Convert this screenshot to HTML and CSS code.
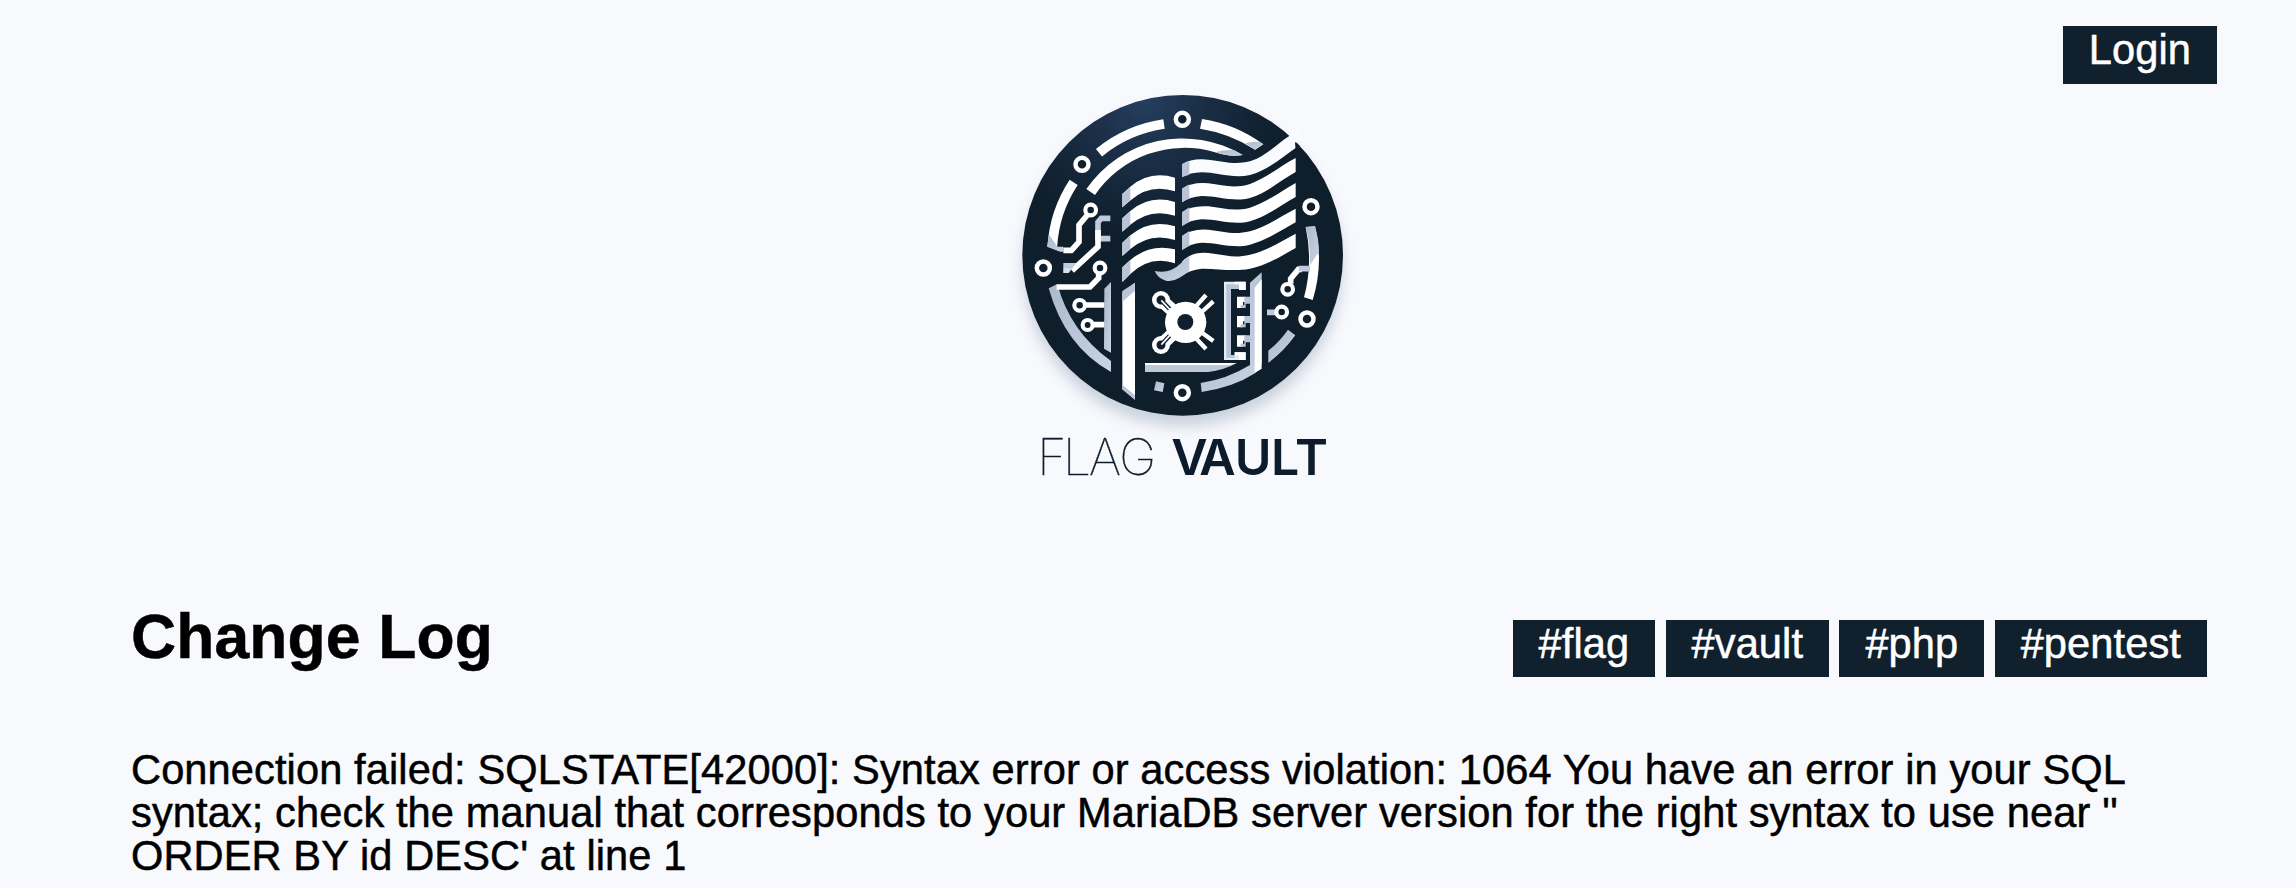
FILE: index.html
```html
<!DOCTYPE html>
<html lang="en">
<head>
<meta charset="utf-8">
<title>Flag Vault</title>
<link rel="stylesheet" href="styles.css">
</head>
<body>
<nav class="topbar"><a class="tag login">Login</a></nav>
<header class="brand">
<svg class="logo" viewBox="0 0 1080 1275" role="img" aria-label="Flag Vault">
  <defs>
    <radialGradient id="disc" gradientUnits="userSpaceOnUse" cx="430" cy="60" r="440">
      <stop offset="0" stop-color="#263f5f"/><stop offset=".35" stop-color="#1c3049"/><stop offset=".75" stop-color="#122334"/><stop offset="1" stop-color="#0f1e2b"/>
    </radialGradient>
    <linearGradient id="steel" x1="0" y1="0" x2="1" y2="1">
      <stop offset="0" stop-color="#acb9cc"/><stop offset="1" stop-color="#c9d4e3"/>
    </linearGradient>
    <filter id="soft" x="-20%" y="-20%" width="140%" height="140%"><feGaussianBlur stdDeviation="20"/></filter>
  </defs>
  <circle cx="548" cy="560" r="480" fill="#93a3b8" opacity=".45" filter="url(#soft)"/>
  <circle cx="548" cy="526" r="481" fill="url(#disc)"/>

  <!-- outer ring segments -->
  <g fill="none" stroke="#fff" stroke-width="29">
    <path d="M297 218A398 398 0 0 1 492 132"/>
    <path d="M221 307A393 393 0 0 0 157 500"/>
  </g>
  <path fill="#fff" d="M606 117Q707 132 790 193L765 209Q690 160 600 146Z"/>
  <path fill="url(#steel)" d="M735 190Q760 183 780 186L790 193L765 209Z"/>
  <path fill="#fff" d="M259 327A351 351 0 0 1 728 225Q690 232 645 217A324 324 0 0 0 285 345Z"/>
  <path fill="url(#steel)" d="M645 217Q670 208 702 210L728 225Q690 232 645 217Z"/>
  <path fill="url(#steel)" d="M147 464L173 500H190V515H180L141 500Z"/>
  <path fill="#fff" d="M917 441L945 439Q972 550 938 660L912 652Q940 550 917 441Z"/>
  <path fill="url(#steel)" d="M917 441L945 439Q956 475 957 515L930 556Q932 495 917 441Z"/>
  <path fill="url(#steel)" d="M864 749L886 766Q850 816 805 848V812Q838 786 864 749Z"/>
  <path fill="url(#steel)" d="M146 625L172 612Q210 755 333 843V876Q195 800 146 625Z"/>

  <!-- circuit traces -->
  <g fill="none" stroke="#fff" stroke-width="17">
    <path d="M190 511H214L237 486V435L262 405"/>
    <path stroke="#bfcbdc" d="M331 415H304L294 426V480M294 476H331"/>
    <path d="M294 450V500L216 572"/>
  </g>
  <path fill="#bfcbdc" d="M190 549H229L206 579H190Z"/>
  <path fill="#fff" d="M190 565H214L206 579H190Z" opacity=".4"/>
  <g fill="none" stroke="#fff" stroke-width="17">
    <path d="M170 621H270L296 594V580M255 675H314M280 734H314"/>
    <path d="M872 611V596L895 568H906"/>
    <path stroke="#bfcbdc" d="M896 566H930M801 697H830"/>
  </g>
  <path fill="url(#steel)" d="M313 626L333 606V818L312 806Z"/>
  <g fill="#0f1f2e" stroke="#fff" stroke-width="13.5">
    <circle cx="547" cy="118" r="19.5"/><circle cx="246" cy="253" r="19.5"/><circle cx="130" cy="564" r="19.5"/>
    <circle cx="933" cy="380" r="19.5"/><circle cx="921" cy="717" r="19.5"/><circle cx="547" cy="938" r="19.5"/>
    <g stroke-width="12.5"><circle cx="272" cy="390" r="16"/><circle cx="300" cy="564" r="16"/><circle cx="239" cy="676" r="16"/><circle cx="263" cy="735" r="15"/><circle cx="863" cy="628" r="16"/><circle cx="845" cy="696" r="16"/></g>
  </g>

  <!-- flag, left panel -->
  <g id="l"><path fill="#fff" d="M367 342L391 320Q450 270 525 293V334Q450 310 390 362L367 382Z"/><path fill="#b9c5d7" d="M367 342L391 320V361L367 382Z"/></g>
  <use href="#l" y="73"/><use href="#l" y="146"/>
  <path fill="#fff" d="M367 562L391 540Q450 490 525 508V550Q450 525 390 583L367 606Z"/>
  <path fill="#b9c5d7" d="M367 562L391 540V583L367 606Z"/>

  <!-- flag, right panel -->
  <path fill="#fafbff" d="M546 253Q575 234 625 239C670 243 700 256 750 244C800 228 830 192 868 168L890 150L910 180L887 188L888 203C845 233 800 273 750 285C700 297 650 277 605 277Q570 278 546 291Z"/>
  <path fill="#0f1f2e" d="M885 186L900 198L887 212Z"/>
  <g fill="#fff">
    <path d="M546 326Q575 306 625 310C670 315 700 327 750 312C800 294 842 257 887 234V276C840 302 800 339 750 354C700 367 650 347 605 348Q570 350 546 367Z"/>
    <path d="M546 397Q575 375 625 379C670 384 700 396 750 383C800 367 842 334 887 309V351C840 377 800 409 750 424C700 437 650 417 605 418Q570 420 546 438Z"/>
    <path d="M546 468Q575 445 625 449C670 454 700 466 750 454C800 440 842 409 887 386V427C840 454 800 480 750 494C700 507 650 487 605 488Q570 491 546 510Z"/>
    <path d="M546 545Q575 514 625 519C670 524 700 536 750 524C800 513 842 484 887 461V504C840 531 800 555 750 566C700 576 650 565 605 566Q568 570 546 587Z"/>
  </g>
  <g fill="#b9c5d7"><path d="M546 253L568 242V284L546 291ZM546 326L568 313V355L546 367ZM546 397L568 382V426L546 438ZM546 468L568 453V497L546 510Z"/></g>
  <path fill="url(#steel)" d="M464 573Q510 582 540 552L568 528V573C535 597 525 603 500 603Q473 596 464 573Z"/>

  <!-- pole and door frame -->
  <path fill="#fff" d="M367 638L405 608V959L367 928Z"/>
  <path fill="#b9c5d7" d="M367 633L405 608V632L367 665ZM367 914L405 946V959L367 928Z"/>
  <path fill="#bfc9d6" d="M435 850H710Q670 871 625 876H435Z"/>
  <path fill="#fff" d="M435 849H710L690 855H435Z"/>
  <path fill="url(#steel)" d="M750 608L785 577V850L765 880Q700 922 605 936L602 909Q682 897 750 855Z"/>
  <path fill="#fff" d="M764 623L785 598V866L764 879Z"/>
  <path fill="url(#steel)" d="M468 904L493 910L488 936L462 931Z"/>
  <path fill="#e6ebf3" d="M672 605H737V630H717V627H693V826H704V817H737V840H672Z"/>
  <path fill="#b9c5d7" d="M679 613H722V621H717V627H693V826H704V834H679Z"/>
  <path fill="#fff" d="M704 605H737V630H717V613H704ZM704 817H737V840H717V826H704Z"/>
  <g id="b"><path fill="#fff" d="M711 650H737V666H729V684H711Z"/><path fill="#b9c5d7" d="M733 650H752V671H737V684H722V675H733Z"/></g>
  <use href="#b" y="58"/><use href="#b" y="116"/>

  <!-- vault wheel -->
  <g fill="none" stroke="#fff" stroke-width="13">
    <path d="M585 682L618 645M602 699L640 664M585 772L618 807M602 755L640 783"/>
    <path stroke-width="39" d="M486 662L540 712M486 792L540 742"/>
  </g>
  <g fill="#fff"><circle cx="483" cy="660" r="27"/><circle cx="483" cy="795" r="27"/></g>
  <g fill="#0f1f2e" stroke="#0f1f2e" stroke-width="13"><circle cx="483" cy="660" r="7"/><circle cx="483" cy="795" r="7"/><path d="M483 660L509 687M483 795L509 767"/></g>
  <path stroke="#fff" stroke-width="5" d="M484 661L512 691M484 794L512 763"/>
  <circle cx="557" cy="727" r="62" fill="#fff"/><circle cx="556" cy="726" r="24" fill="#0f1f2e"/>

  <text class="word thin" y="1184" x="112 189 267 358">FLAG</text>
  <text class="word strong" y="1184" x="514 598 704 813 885">VAULT</text>
</svg>
</header>
<main class="content">
  <div class="heading">
    <h1 class="title">Change Log</h1>
    <div class="tags"><a class="tag">#flag</a><a class="tag">#vault</a><a class="tag">#php</a><a class="tag">#pentest</a></div>
  </div>
  <p class="message">Connection failed: SQLSTATE[42000]: Syntax error or access violation: 1064 You have an error in your SQL syntax; check the manual that corresponds to your MariaDB server version for the right syntax to use near '' ORDER BY id DESC' at line 1</p>
</main>
</body>
</html>
```

FILE: styles.css
```css
* { box-sizing: border-box; }
body {
  margin: 0;
  height: 888px;
  overflow: hidden;
  background: #f8f9fd;
  color: #000;
  font: 41.6px/43.2px "Liberation Sans", Arial, sans-serif;
  font-variant-ligatures: none;
  letter-spacing: .1px;
  -webkit-text-stroke: .5px currentColor;
}
.topbar {
  display: flex;
  justify-content: flex-end;
  height: 80px;
  padding: 26px 79px 0 0;
}
.tag {
  display: block;
  height: 57px;
  padding: 2px 26px 0;
  background: #10202d;
  color: #fff;
}
.login { height: 58px; }
.brand {
  display: flex;
  justify-content: center;
  height: 525px;
  padding-left: 64px;
}
.logo { width: 360px; height: 425px; -webkit-text-stroke: 0; letter-spacing: 0; }
.word { fill: #0d1c2c; font-family: Inter, sans-serif; font-size: 150px; }
.thin { font-weight: 100; stroke: #0d1c2c; stroke-width: 1.5px; -webkit-text-stroke: 1.5px #0d1c2c; }
.strong { font-weight: 600; }
.content { padding: 0 89px 0 131px; }
.heading {
  display: flex;
  justify-content: space-between;
  height: 142px;
}
.title { margin: -4px 0 0; font-size: 62.4px; line-height: 72px; letter-spacing: .15px; }
.tags { display: flex; gap: 10.3px; padding-top: 16px; }
.tags .tag { margin-top: -1px; }
.message { margin: 0; padding-top: 1px; }
```
